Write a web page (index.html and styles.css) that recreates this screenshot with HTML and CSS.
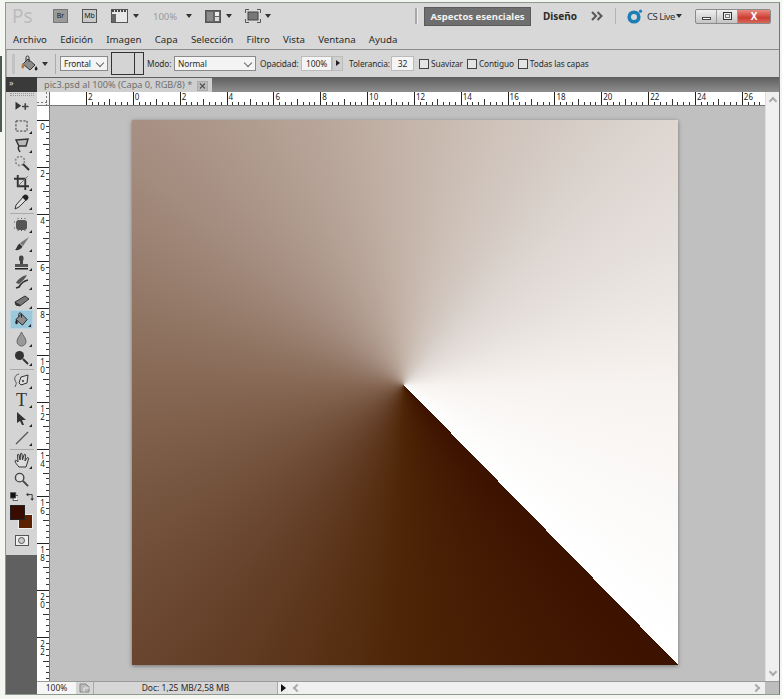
FILE: index.html
```html
<!DOCTYPE html>
<html lang="es">
<head>
    <meta charset="UTF-8">
    <title>Photoshop CS5</title>
    <link rel="stylesheet" href="styles.css">
</head>
<body>
<span class="desktop-sliver"></span>
<div class="window">
    <!-- top application bar -->
    <div class="appbar">
        <span class="ps-logo">Ps</span>
        <span class="badge badge-br">Br</span>
        <span class="badge badge-mb">Mb</span>
        <svg class="bar-icon bar-film" width="17" height="14" viewBox="0 0 17 14"><rect x="0.5" y="0.5" width="16" height="13" fill="#e8e8e8" stroke="#555"/><path d="M1 2H16" stroke="#444" stroke-width="2" stroke-dasharray="2 1"/><rect x="1" y="5" width="4" height="8" fill="#666"/></svg>
        <span class="caret bar-caret1"></span>
        <span class="zoom-label">100%</span>
        <span class="caret bar-caret2"></span>
        <svg class="bar-icon bar-arrange" width="16" height="13" viewBox="0 0 16 13"><rect x="0.5" y="0.5" width="15" height="12" fill="#666" stroke="#555"/><rect x="2" y="2" width="6" height="9" fill="#8a8a8a"/><rect x="10" y="2" width="4" height="4" fill="#eee"/><rect x="10" y="7" width="4" height="4" fill="#ddd"/></svg>
        <span class="caret bar-caret3"></span>
        <svg class="bar-icon bar-screen" width="16" height="14" viewBox="0 0 16 14"><rect x="3" y="3" width="10" height="8" fill="#777" stroke="#444"/><path d="M0.500 4V0.500H4M12 0.500H15.500V4M15.500 10V13.500H12M4 13.500H0.500V10" fill="none" stroke="#555"/></svg>
        <span class="caret bar-caret4"></span>
        <span class="bar-grip"></span>
        <span class="workspace">Aspectos esenciales</span>
        <span class="workspace-alt">Diseño</span>
        <svg class="more" width="12" height="10" viewBox="0 0 12 10"><path d="M1 1 5 5 1 9M6.500 1 10.500 5 6.500 9" fill="none" stroke="#555" stroke-width="2"/></svg>
        <span class="bar-sep"></span>
        <svg class="cs-icon" width="16" height="15" viewBox="0 0 16 15"><circle cx="7" cy="8" r="4.800" fill="none" stroke="#1b7fb5" stroke-width="3.600"/><circle cx="13.500" cy="2.200" r="1.600" fill="#1b7fb5"/></svg>
        <span class="cs-live">CS Live</span>
        <span class="caret caret-cs"></span>
        <div class="win-btns">
            <span class="win-btn"><i class="glyph-min"></i></span>
            <span class="win-btn"><i class="glyph-max"></i></span>
            <span class="win-btn win-close">X</span>
        </div>
    </div>

    <div class="menubar">
        <span>Archivo</span><span>Edición</span><span>Imagen</span><span>Capa</span><span>Selección</span><span>Filtro</span><span>Vista</span><span>Ventana</span><span>Ayuda</span>
    </div>

    <!-- tool options -->
    <div class="options">
        <span class="opt-grip"></span>
        <svg class="opt-bucket" width="18" height="18" viewBox="0 0 18 18"><path d="M7 4 14 10 9 15 2 9Z" fill="#8c8c8c" stroke="#333"/><path d="M5 6V2.500a1.500 1.500 0 0 1 3 0V7" fill="none" stroke="#333"/><path d="M2 8C0 10 0 13 1.500 13.500S4 11 3 9Z" fill="#b5773f"/><path d="M15 11c1.500 2 2 3 1 4s-3 0-2-2z" fill="#222"/></svg>
        <span class="caret opt-caret"></span>
        <span class="opt-sep"></span>
        <span class="select select-frontal">Frontal<i class="chev"></i></span>
        <span class="swatch"><i></i></span>
        <span class="opt-label label-modo">Modo:</span>
        <span class="select select-modo">Normal<i class="chev"></i></span>
        <span class="opt-label label-opac">Opacidad:</span>
        <span class="field field-opac">100%</span><span class="stepper"></span>
        <span class="opt-label label-tol">Tolerancia:</span>
        <span class="field field-tol">32</span>
        <span class="check check-first"></span><span class="opt-label">Suavizar</span>
        <span class="check"></span><span class="opt-label">Contiguo</span>
        <span class="check"></span><span class="opt-label">Todas las capas</span>
    </div>

    <div class="workarea">
        <!-- left tool panel -->
        <div class="toolcol">
            <div class="tool-head">»</div>
            <div class="tools">
                <span class="tool-grip"></span>
                <div class="tool"><svg width="16" height="13" viewBox="0 0 18 16"><path d="M1 2 8 7 1 12Z" fill="#333"/><path d="M13 4V12M9 8H17" stroke="#444" stroke-width="2"/></svg></div>
                <div class="tool corner"><svg width="13" height="12" viewBox="0 0 14 13"><rect x="1" y="1" width="12" height="11" fill="none" stroke="#333" stroke-dasharray="2.500 1.500"/></svg></div>
                <div class="tool corner"><svg width="16" height="16" viewBox="0 0 16 16"><path d="M2 3 14 2 12 9 5 9Z" fill="#bbb" stroke="#333" stroke-width="1.400"/><path d="M5 9C3 12 5 13 6 15" fill="none" stroke="#333" stroke-width="1.400"/></svg></div>
                <div class="tool"><svg width="17" height="17" viewBox="0 0 17 17"><circle cx="7" cy="6" r="4.500" fill="none" stroke="#888" stroke-dasharray="2 1.500" stroke-width="1.600"/><path d="M10 9 16 15" stroke="#333" stroke-width="2"/></svg></div>
                <div class="tool corner"><svg width="15" height="15" viewBox="0 0 16 16"><path d="M4 0V12H16M0 4H12V16" fill="none" stroke="#333" stroke-width="2"/><path d="M5 11 15 1" stroke="#777"/></svg></div>
                <div class="tool corner"><svg width="15" height="16" viewBox="0 0 15 16"><path d="M10 2 13 5 5 13 1 15 2 11Z" fill="#ddd" stroke="#333"/><path d="M8 3 9.500 1.500a2 2 0 0 1 4 4L12 7Z" fill="#222"/></svg></div>
                <div class="tool-sep"></div>
                <div class="tool corner"><svg width="15" height="14" viewBox="0 0 15 14"><rect x="2" y="2" width="11" height="10" rx="3" fill="#555"/><path d="M4 0V14M7.500 0V14M11 0V14M0 4H15M0 10H15" stroke="#555" stroke-dasharray="1 2"/></svg></div>
                <div class="tool corner"><svg width="16" height="15" viewBox="0 0 16 15"><path d="M15 1 6 7 9 10Z" fill="#777"/><path d="M5.500 7.500 8.500 10.500C7 14 3 14.500 1 14 3 12.500 3 9 5.500 7.500Z" fill="#333"/></svg></div>
                <div class="tool corner"><svg width="15" height="15" viewBox="0 0 15 15"><rect x="5" y="0.500" width="4.500" height="6" rx="2" fill="#444"/><path d="M1 9H14V12H1Z" fill="#555"/><rect x="1" y="13" width="13" height="1.500" fill="#222"/><rect x="6" y="6" width="3" height="3" fill="#444"/></svg></div>
                <div class="tool corner"><svg width="15" height="15" viewBox="0 0 15 15"><path d="M13 1C8 2 4 5 2 9L5 10C8 7 11 5 13 1Z" fill="#555"/><path d="M14 6C10 7 7 9 5 13L2 14" fill="none" stroke="#333" stroke-width="1.800"/></svg></div>
                <div class="tool corner"><svg width="16" height="12" viewBox="0 0 16 12"><path d="M1 7 11 1 15 4 6 11 2 10Z" fill="#777" stroke="#333"/><path d="M1 7 6 9.500V11L2 10Z" fill="#333"/></svg></div>
                <div class="tool corner tool-on"><svg width="16" height="15" viewBox="0 0 17 16"><path d="M8 2 14 8 9 14 2 8Z" fill="#8c8c8c" stroke="#222"/><path d="M5 5V2.500a1.500 1.500 0 0 1 3 0V6" fill="none" stroke="#222"/><path d="M2.500 8C1 10 1 13 2.500 13S4.500 11 3.500 9Z" fill="#222"/></svg></div>
                <div class="tool corner"><svg width="11" height="16" viewBox="0 0 11 16"><path d="M5.500 1C7 5 10 7 10 10.500a4.500 4.500 0 0 1-9 0C1 7 4 5 5.500 1Z" fill="#999" stroke="#666"/></svg></div>
                <div class="tool corner"><svg width="15" height="15" viewBox="0 0 15 15"><circle cx="5.500" cy="5.500" r="4.500" fill="#333"/><path d="M9 9 14 14" stroke="#333" stroke-width="2"/></svg></div>
                <div class="tool-sep"></div>
                <div class="tool corner"><svg width="17" height="16" viewBox="0 0 17 16"><path d="M15 2 8 4 6 10 8 12 14 10Z" fill="#ddd" stroke="#333"/><path d="M6 1C1 2 1 7 3 9C4 11 2 13 2 14" fill="none" stroke="#555"/><circle cx="10" cy="8" r="1" fill="#333"/></svg></div>
                <div class="tool corner tool-type">T</div>
                <div class="tool corner"><svg width="11" height="15" viewBox="0 0 11 15"><path d="M1 1 10 9H6L8 14H6L4 10 1 12Z" fill="#333"/></svg></div>
                <div class="tool corner"><svg width="14" height="14" viewBox="0 0 14 14"><path d="M1 13 13 1" stroke="#555" stroke-width="1.300"/></svg></div>
                <div class="tool-sep"></div>
                <div class="tool corner"><svg width="16" height="17" viewBox="0 0 16 17"><path d="M5 15C3 13 1 10 1 9S2.500 8 4 10L3.500 3C3.500 2 5 2 5 3L6 8 6.500 2C6.500 1 8 1 8 2L8.500 8 10 3C10 2 11.500 2 11.500 3L11 9 13 6C14 5 15 6 14.500 7L12 15Z" fill="#ddd" stroke="#333"/></svg></div>
                <div class="tool"><svg width="15" height="15" viewBox="0 0 16 16"><circle cx="6" cy="6" r="4.500" fill="#ddd" stroke="#444" stroke-width="1.500"/><path d="M9.500 9.500 15 15" stroke="#444" stroke-width="2"/></svg></div>
                <div class="mini-colors">
                    <svg width="11" height="11" viewBox="0 0 11 11"><rect x="4" y="4" width="6.500" height="6.500" fill="#fff" stroke="#333"/><rect x="0.500" y="0.500" width="7" height="7" fill="#111" stroke="#555"/></svg>
                    <svg width="11" height="11" viewBox="0 0 11 11"><path d="M2 3H8V9" fill="none" stroke="#333" stroke-width="1.200"/><path d="M0 3 3 0.500V5.500ZM8 11 5.500 8H10.500Z" fill="#333"/></svg>
                </div>
                <div class="colors"><span class="color-bg"></span><span class="color-fg"></span></div>
                <div class="quickmask"><i></i></div>
            </div>
            <div class="tool-rest"></div>
        </div>

        <div class="docarea">
            <div class="tabstrip">
                <div class="tab">pic3.psd al 100% (Capa 0, RGB/8) * <span class="tab-close"><svg width="7" height="6" viewBox="0 0 7 6"><path d="M1 0.500 6 5.500M6 0.500 1 5.500" stroke="#555" stroke-width="1.200"/></svg></span></div>
            </div>
            <div class="doc-main">
                <div class="doc-inner">
                    <div class="ruler-top">
                        <span class="ruler-corner"></span>
                        <div class="ruler-h">
                            <span>2</span><span>0</span><span>2</span><span>4</span><span>6</span><span>8</span><span>10</span><span>12</span><span>14</span><span>16</span><span>18</span><span>20</span><span>22</span><span>24</span><span>26</span>
                        </div>
                    </div>
                    <div class="doc-mid">
                        <div class="ruler-v">
                            <span>0</span><span>2</span><span>4</span><span>6</span><span>8</span><span>10</span><span>12</span><span>14</span><span>16</span><span>18</span><span>20</span><span>22</span>
                        </div>
                        <div class="pasteboard"><div class="canvas"></div></div>
                    </div>
                </div>
                <div class="scroll-v"><i class="arrow-up"></i><i class="arrow-down"></i></div>
            </div>
            <div class="statusbar">
                <span class="st-zoom">100%</span>
                <span class="st-icon"><svg width="11" height="10" viewBox="0 0 11 10"><path d="M1 9V1H7L10 4V9Z" fill="#bbb" stroke="#888"/><path d="M5 9V5H10" fill="none" stroke="#e8e8e8"/></svg></span>
                <span class="st-doc">Doc: 1,25 MB/2,58 MB</span>
                <span class="st-arrow"></span>
                <span class="st-scroll"><i class="arrow-left"></i><i class="arrow-right"></i></span>
                <span class="st-corner"></span>
            </div>
        </div>
    </div>
</div>
</body>
</html>
```
FILE: styles.css
```css
/* Photoshop CS5 window */
* { box-sizing: border-box; }
html, body { height: 100%; }
body {
    margin: 0;
    overflow: hidden;
    background-color: #f3f6f1;
    font-family: "Noto Sans", "DejaVu Sans", sans-serif;
    font-size: 10px;
    color: #2a2a2a;
}
.desktop-sliver {
    position: absolute;
    left: 0;
    top: 56px;
    width: 2px;
    height: 76px;
    background-color: #4c5a50;
}
.window {
    display: flex;
    flex-direction: column;
    width: 775px;
    height: 693px;
    margin: 2px 0 0 5px;
    background-color: #d6d6d6;
    border: 1px solid #8f9a8f;
    border-right-color: #6d7a6d;
}

/* app bar */
.appbar {
    display: flex;
    align-items: center;
    height: 26px;
    flex: none;
    background-color: #d8d8d8;
}
.ps-logo { margin-left: 6px; font-size: 19px; color: #bcbcbc; line-height: 1; width: 22px; }
.badge {
    width: 15px;
    height: 14px;
    font-size: 7px;
    line-height: 12px;
    text-align: center;
    border: 1px solid #777;
    color: #222;
}
.badge-br { margin-left: 19px; background-color: #9a9a9a; }
.badge-mb { margin-left: 14px; background-color: #c9c9c9; border-color: #555; }
.bar-film { margin-left: 14px; }
.caret {
    width: 0;
    height: 0;
    border-left: 3px solid transparent;
    border-right: 3px solid transparent;
    border-top: 4px solid #333;
}
.bar-caret1 { margin-left: 5px; }
.zoom-label { margin-left: 14px; font-size: 9.500px; color: #9a9a9a; width: 26px; }
.bar-caret2 { margin-left: 7px; }
.bar-arrange { margin-left: 13px; }
.bar-caret3 { margin-left: 5px; }
.bar-screen { margin-left: 13px; }
.bar-caret4 { margin-left: 4px; }
.bar-grip { margin-left: 144px; width: 3px; height: 16px; background-color: #a8a8a8; border-right: 1px solid #eee; }
.workspace {
    margin-left: 6px;
    width: 107px;
    height: 19px;
    line-height: 17px;
    text-align: center;
    background-color: #6e6e6e;
    color: #f2f2f2;
    font-weight: bold;
    font-size: 9.500px;
    border: 1px solid #5a5a5a;
}
.workspace-alt { margin-left: 12px; font-weight: bold; font-size: 10px; color: #2b2b2b; width: 32px; }
.more { margin-left: 16px; }
.bar-sep { margin-left: 12px; width: 1px; height: 16px; background-color: #b4b4b4; }
.cs-icon { margin-left: 11px; }
.cs-live { margin-left: 4px; width: 26px; font-size: 9.500px; letter-spacing: -0.500px; white-space: nowrap; color: #333; }
.caret-cs { margin-left: 3px; }
.win-btns {
    display: flex;
    margin-left: 13px;
    height: 15px;
    width: 76px;
    border: 1px solid #8a8a8a;
    border-radius: 2px;
    overflow: hidden;
    background: linear-gradient(#f0f0f0, #c4c4c4);
}
.win-btn { display: flex; align-items: center; justify-content: center; width: 21px; border-right: 1px solid #999; }
.win-close {
    flex: 1;
    border: none;
    background: linear-gradient(#e88a7e, #cc3d33 60%, #d9675a);
    color: #fff;
    font-weight: bold;
    font-size: 10px;
    line-height: 1;
}
.glyph-min { width: 9px; height: 3px; margin-top: 5px; border: 1px solid #444; background-color: #fff; }
.glyph-max { width: 9px; height: 8px; border: 1px solid #333; background-color: #eee; box-shadow: inset 0 0 0 1px #eee, inset 0 0 0 2px #777; }

/* menu */
.menubar {
    display: flex;
    align-items: center;
    height: 20px;
    flex: none;
    padding-left: 7px;
    gap: 13.250px;
    font-size: 9.700px;
    background-color: #d8d8d8;
}

/* options bar */
.options {
    display: flex;
    align-items: center;
    height: 28px;
    flex: none;
    font-size: 8.300px;
    letter-spacing: -0.100px;
    background-color: #d6d6d6;
    border-top: 1px solid #8c8c8c;
    border-left: 1px solid #aaa;
}
.opt-grip { margin-left: 5px; width: 3px; height: 20px; background-color: #c2c2c2; }
.opt-bucket { margin-left: 6px; }
.opt-caret { margin-left: 3px; }
.opt-sep { margin-left: 7px; width: 1px; height: 20px; background-color: #aaa; }
.select {
    position: relative;
    display: block;
    height: 15px;
    line-height: 13px;
    padding-left: 3px;
    background-color: #f4f4f4;
    border: 1px solid #8a8a8a;
}
.chev {
    position: absolute;
    right: 4px;
    top: 3px;
    width: 6px;
    height: 6px;
    border-right: 1px solid #666;
    border-bottom: 1px solid #666;
    transform: rotate(45deg);
}
.select-frontal { margin-left: 4px; width: 48px; }
.swatch {
    display: block;
    margin-left: 3px;
    width: 33px;
    height: 23px;
    background-color: #d4d4d4;
    border: 1px solid #333;
}
.swatch i { display: block; margin-left: 22px; height: 100%; border-left: 1px solid #333; }
.opt-label { margin-left: 3px; white-space: nowrap; }
.label-modo { width: 24px; }
.select-modo { margin-left: 3px; width: 82px; }
.label-opac { margin-left: 4px; width: 38px; }
.field {
    display: block;
    height: 15px;
    line-height: 13px;
    text-align: center;
    background-color: #f4f4f4;
    border: 1px solid #bbb;
    font-size: 8.500px;
}
.field-opac { margin-left: 3px; width: 31px; }
.stepper {
    position: relative;
    width: 11px;
    height: 15px;
    background-color: #d0d0d0;
    border: 1px solid #bbb;
}
.stepper::after {
    content: "";
    position: absolute;
    left: 3px;
    top: 3px;
    border-left: 4px solid #222;
    border-top: 3px solid transparent;
    border-bottom: 3px solid transparent;
}
.label-tol { margin-left: 6px; width: 40px; }
.field-tol { margin-left: 2px; width: 23px; }
.check { display: block; margin-left: 4px; width: 10px; height: 10px; background-color: #e4e4e4; border: 1px solid #444; }
.check-first { margin-left: 5px; }
.check + .opt-label { margin-left: 2px; }

/* work area */
.workarea { display: flex; flex: 1; min-height: 0; }
.toolcol { display: flex; flex-direction: column; width: 31px; flex: none; }
.tool-head {
    height: 15px;
    padding-left: 3px;
    font-size: 9px;
    line-height: 11px;
    color: #ddd;
    background-color: #3a3a3a;
}
.tools { display: flex; flex-direction: column; align-items: center; background-color: #d4d4d4; }
.tool-grip { width: 24px; height: 3px; margin: 1px 0; border-top: 1px dotted #999; border-bottom: 1px dotted #999; }
.tool { position: relative; display: flex; align-items: center; justify-content: center; width: 23px; height: 19px; }
.corner::after {
    content: "";
    position: absolute;
    right: 1px;
    bottom: 1px;
    border-right: 3px solid #222;
    border-top: 3px solid transparent;
}
.tool-on { background-color: #9cc8dc; border: 1px solid #b5d5e3; }
.tool-sep { width: 24px; height: 1px; margin: 1.500px 0; background-color: #aaa; }
.tool-type { font-family: "Liberation Serif", serif; font-size: 18px; line-height: 1; color: #333; }
.mini-colors { display: flex; gap: 8px; margin-top: 2px; width: 26px; padding-left: 1px; }
.colors { position: relative; width: 26px; height: 27px; margin-top: 3px; }
.color-fg, .color-bg { position: absolute; width: 15px; height: 15px; border: 1px solid #222; }
.color-fg { left: 1px; top: 0; background-color: #3a0c00; }
.color-bg { left: 9px; top: 9px; background-color: #5c2100; border-color: #eee; }
.quickmask {
    display: flex;
    align-items: center;
    justify-content: center;
    width: 14px;
    height: 11px;
    margin: 3px 0 9px;
    background-color: #eee;
    border: 1px solid #555;
}
.quickmask i { width: 7px; height: 7px; border-radius: 50%; border: 1px solid #555; background-color: #ccc; }
.tool-rest { flex: 1; background-color: #606060; }

/* document */
.docarea { display: flex; flex-direction: column; flex: 1; min-width: 0; }
.tabstrip {
    height: 15px;
    flex: none;
    padding-top: 1px;
    background: linear-gradient(#5e5e5e, #8e8e8e);
}
.tab {
    width: 175px;
    height: 14px;
    padding-left: 7px;
    font-size: 9.200px;
    line-height: 13px;
    color: #6e6e6e;
    background-color: #cfcfcf;
    white-space: nowrap;
}
.tab-close {
    display: inline-flex;
    align-items: center;
    justify-content: center;
    width: 11px;
    height: 10px;
    margin-left: 2px;
    vertical-align: -1px;
    background-color: #bcbcbc;
    border: 1px solid #aaa;
}
.doc-main { display: flex; flex: 1; min-height: 0; }
.doc-inner { display: flex; flex-direction: column; flex: 1; min-width: 0; }
.ruler-top { display: flex; height: 14px; flex: none; background-color: #fff; border-bottom: 1px solid #777; }
.ruler-corner {
    width: 13px;
    flex: none;
    border-right: 1px solid #666;
    background-color: #f2f2f2;
    background-image:
        repeating-linear-gradient(90deg, #777 0 2px, transparent 2px 4px),
        repeating-linear-gradient(180deg, #777 0 2px, transparent 2px 4px);
    background-size: 100% 1px, 1px 100%;
    background-position: 0 10px, 9px 0;
    background-repeat: no-repeat;
}
.ruler-h {
    display: flex;
    flex: 1;
    overflow: hidden;
    background-image:
        repeating-linear-gradient(90deg, #222 0 1px, transparent 1px 46.850px),
        repeating-linear-gradient(90deg, #333 0 1px, transparent 1px 23.425px),
        repeating-linear-gradient(90deg, #333 0 1px, transparent 1px 5.856px);
    background-size: 100% 100%, 100% 6px, 100% 3px;
    background-position: 36px 0, 36px bottom, 36px bottom;
    background-repeat: no-repeat;
}
.ruler-h span {
    width: 46.850px;
    flex: none;
    padding-left: 2px;
    font-size: 8px;
    line-height: 10px;
    color: #222;
}
.ruler-h span:first-child { margin-left: 36px; }
.doc-mid { display: flex; flex: 1; min-height: 0; }
.ruler-v {
    display: flex;
    flex-direction: column;
    width: 13px;
    flex: none;
    overflow: hidden;
    padding-top: 14px;
    background-color: #fff;
    border-right: 1px solid #777;
    background-image:
        repeating-linear-gradient(180deg, #222 0 1px, transparent 1px 47px),
        repeating-linear-gradient(180deg, #333 0 1px, transparent 1px 23.500px),
        repeating-linear-gradient(180deg, #333 0 1px, transparent 1px 5.875px);
    background-size: 100% 100%, 6px 100%, 3px 100%;
    background-position: 0 14px, right 14px, right 14px;
    background-repeat: no-repeat;
}
.ruler-v span {
    height: 47px;
    flex: none;
    padding: 1px 0 0 1px;
    font-size: 8px;
    line-height: 8px;
    letter-spacing: -3px;
    writing-mode: vertical-lr;
    text-orientation: upright;
    color: #222;
}
.pasteboard {
    display: flex;
    align-items: center;
    justify-content: center;
    flex: 1;
    background-color: #c0c0c0;
}
.canvas {
    width: 546px;
    height: 545px;
    margin: 0 6px 2px 0;
    box-shadow: 0 1px 4px rgba(60, 60, 60, 0.6);
    background: conic-gradient(from 135.600deg at 272px 265px,
        #3c1200 0deg,
        #4e2506 45deg,
        #6a4630 90deg,
        #866854 135deg,
        #a89184 180deg,
        #c4b4a9 225deg,
        #ddd6d1 270deg,
        #f7f3f0 315deg,
        #ffffff 360deg);
}
.scroll-v {
    display: flex;
    flex-direction: column;
    justify-content: space-between;
    align-items: center;
    width: 14px;
    flex: none;
    padding: 6px 0;
    background-color: #f0f0f0;
    border-left: 1px solid #ddd;
}
.arrow-up, .arrow-down, .arrow-left, .arrow-right {
    display: block;
    width: 6px;
    height: 6px;
    border-right: 2px solid #aaa;
    border-bottom: 2px solid #aaa;
}
.arrow-up { transform: rotate(225deg); }
.arrow-down { transform: rotate(45deg); }
.arrow-left { transform: rotate(135deg); }
.arrow-right { transform: rotate(-45deg); }

/* status bar */
.statusbar {
    display: flex;
    align-items: center;
    height: 13px;
    flex: none;
    font-size: 8.500px;
    background-color: #d6d6d6;
    border-top: 1px solid #9a9a9a;
}
.st-zoom { width: 39px; height: 100%; line-height: 12px; text-align: center; background-color: #f6f6f6; }
.st-icon { display: flex; align-items: center; justify-content: center; width: 18px; height: 100%; border-right: 1px solid #aaa; }
.st-doc { width: 183px; text-align: center; line-height: 12px; }
.st-arrow {
    position: relative;
    width: 11px;
    height: 100%;
    background-color: #eee;
    border-left: 1px solid #aaa;
}
.st-arrow::after {
    content: "";
    position: absolute;
    left: 3px;
    top: 2px;
    border-left: 5px solid #111;
    border-top: 4px solid transparent;
    border-bottom: 4px solid transparent;
}
.st-scroll {
    display: flex;
    justify-content: space-between;
    align-items: center;
    flex: 1;
    height: 100%;
    padding: 0 6px;
    background-color: #f0f0f0;
}
.st-corner { width: 14px; height: 100%; background-color: #bdbdbd; }
```
